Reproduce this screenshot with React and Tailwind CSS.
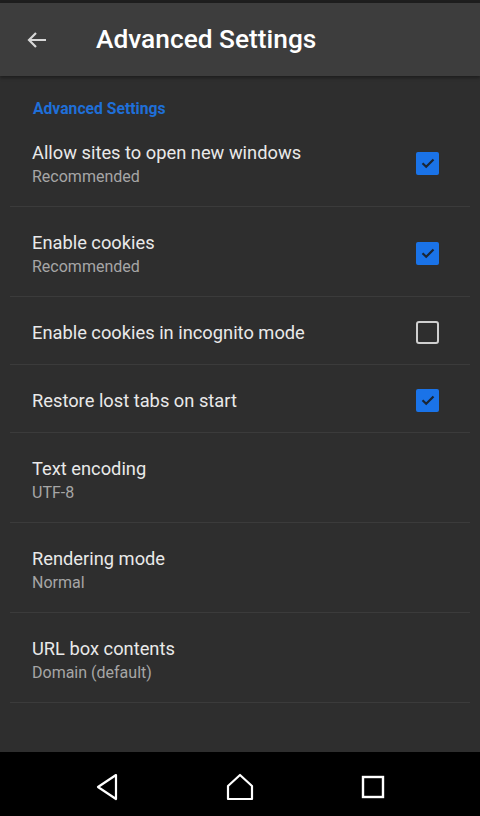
import React from 'react';

const rows = [
  { title: 'Allow sites to open new windows', sub: 'Recommended', check: true },
  { title: 'Enable cookies', sub: 'Recommended', check: true },
  { title: 'Enable cookies in incognito mode', check: false },
  { title: 'Restore lost tabs on start', check: true },
  { title: 'Text encoding', sub: 'UTF-8' },
  { title: 'Rendering mode', sub: 'Normal' },
  { title: 'URL box contents', sub: 'Domain (default)' },
];

const Checkbox = ({ checked }) =>
  checked ? (
    <div className="w-[23px] h-[23px] rounded-[2px] bg-[#1a73e8] flex items-center justify-center">
      <svg width="16" height="16" viewBox="0 0 16 16" fill="none">
        <path d="M2.5 8.2 L6.2 11.8 L13.5 4.5" stroke="#1b2634" strokeWidth="2.2" />
      </svg>
    </div>
  ) : (
    <div className="w-[23px] h-[23px] rounded-[3px] border-2 border-[#cfcfcf]" />
  );

const SettingRow = ({ title, sub, check }) => (
  <div
    className={`flex items-center justify-between pl-[22px] pr-[31px] pt-[3px] border-b border-[#3b3b3b] ${
      sub ? 'h-[90px]' : 'h-[68px]'
    }`}
  >
    <div className="flex flex-col pt-[2px]">
      <span className="text-[18.3px] leading-[24px] text-[#e9e9e9]">{title}</span>
      {sub && <span className="text-[16px] leading-[23px] text-[#a6a6a6]">{sub}</span>}
    </div>
    {check !== undefined && <Checkbox checked={check} />}
  </div>
);

const App = () => {
  return (
    <div className="w-[480px] h-[816px] flex flex-col bg-[#2e2e2e] font-['Roboto',sans-serif] overflow-hidden">
      <div className="h-[3px] bg-[#1e1e1e]" />
      <div className="h-[73px] bg-[#3d3d3d] flex items-center shadow-[0_2px_3px_rgba(0,0,0,0.35)] z-10">
        <svg className="ml-[25px]" width="24" height="24" viewBox="0 0 24 24" fill="none">
          <path d="M21 12 H4 M11 5 L4 12 L11 19" stroke="#d8d8d8" strokeWidth="2.2" />
        </svg>
        <h1 className="ml-[47px] text-[26.3px] font-medium text-white">Advanced Settings</h1>
      </div>

      <div className="flex-1 flex flex-col">
        <div className="h-[41px] pl-[33px] pt-[21px]">
          <span className="text-[15.7px] leading-[20px] font-bold text-[#1f6fd8]">Advanced Settings</span>
        </div>
        <div className="mx-[10px]">
          {rows.map((r) => (
            <SettingRow key={r.title} {...r} />
          ))}
        </div>
      </div>

      <div className="h-[64px] bg-black flex items-center justify-center pt-[5px]">
        <div className="w-[133px] flex justify-center">
          <svg width="24" height="28" viewBox="0 0 24 28" fill="none">
            <path d="M21 2 L3 14 L21 26 Z" stroke="white" strokeWidth="2.2" strokeLinejoin="round" />
          </svg>
        </div>
        <div className="w-[133px] flex justify-center">
          <svg width="28" height="28" viewBox="0 0 28 28" fill="none">
            <path d="M2 13 L14 2 L26 13 V26 H2 Z" stroke="white" strokeWidth="2.2" strokeLinejoin="round" />
          </svg>
        </div>
        <div className="w-[133px] flex justify-center">
          <svg width="24" height="24" viewBox="0 0 24 24" fill="none">
            <rect x="2" y="2" width="20" height="20" stroke="white" strokeWidth="2.4" />
          </svg>
        </div>
      </div>
    </div>
  );
};

export default App;
